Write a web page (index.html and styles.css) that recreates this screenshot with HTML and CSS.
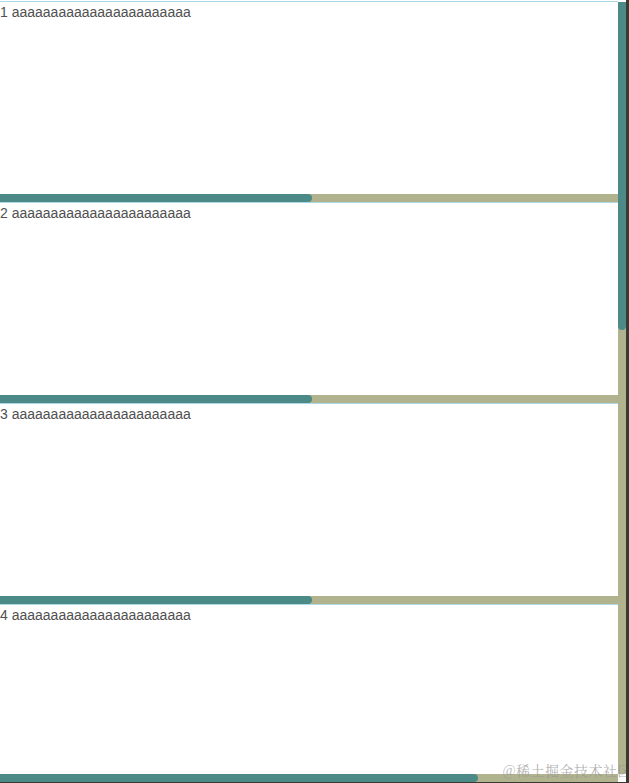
FILE: index.html
```html
<!DOCTYPE html>
<html>
<head>
<meta charset="utf-8">
<link rel="stylesheet" href="styles.css">
</head>
<body>
<div class="frame">
  <div class="main">
    <div class="list">
      <div class="item">
        <div class="content">1 aaaaaaaaaaaaaaaaaaaaaaa</div>
        <div class="hbar"><div class="hthumb"></div></div>
      </div>
      <div class="item">
        <div class="content">2 aaaaaaaaaaaaaaaaaaaaaaa</div>
        <div class="hbar"><div class="hthumb"></div></div>
      </div>
      <div class="item">
        <div class="content">3 aaaaaaaaaaaaaaaaaaaaaaa</div>
        <div class="hbar"><div class="hthumb"></div></div>
      </div>
      <div class="item">
        <div class="content">4 aaaaaaaaaaaaaaaaaaaaaaa</div>
        <div class="hbar"><div class="hthumb"></div></div>
      </div>
    </div>
    <div class="vbar"><div class="vthumb"></div></div>
  </div>
  <div class="bottom">
    <div class="hbar outer"><div class="hthumb wide"></div></div>
    <div class="corner"></div>
  </div>
  <div class="watermark">@稀土掘金技术社区</div>
</div>
</body>
</html>
```
FILE: styles.css
```css
html, body {
  margin: 0;
  padding: 0;
  background: #ffffff;
}
.frame {
  position: relative;
  width: 626px;
  height: 782px;
  border-right: 3px solid #3b3a30;
  border-bottom: 1px solid #3b3a30;
  display: flex;
  flex-direction: column;
  overflow: hidden;
  background: #ffffff;
}
.main {
  display: flex;
  height: 774px;
}
.list {
  width: 618px;
  height: 774px;
  overflow: hidden;
  padding-top: 1px;
  box-sizing: border-box;
  font-family: "Liberation Sans", Arial, sans-serif;
  font-size: 14px;
  color: #505050;
}
.item {
  border-top: 1px solid #add8e6;
  display: flex;
  flex-direction: column;
}
.content {
  height: 192px;
  padding-top: 2px;
  box-sizing: border-box;
  white-space: nowrap;
}
.hbar {
  height: 8px;
  background: #b1b38f;
  display: flex;
  flex-shrink: 0;
}
.hthumb {
  width: 312px;
  height: 8px;
  background: #4c8a87;
  border-radius: 0 4px 4px 0;
}
.hthumb.wide {
  width: 478px;
}
.vbar {
  width: 8px;
  height: 774px;
  padding-top: 2px;
  box-sizing: border-box;
  background: #b1b38f;
  box-shadow: inset 0 2px 0 #ffffff;
}
.vthumb {
  width: 8px;
  height: 328px;
  background: #4c8a87;
  border-radius: 0 0 4px 4px;
}
.bottom {
  display: flex;
  height: 8px;
}
.outer {
  width: 618px;
}
.corner {
  width: 8px;
  height: 8px;
  background: #ffffff;
}
.watermark {
  position: absolute;
  right: -6px;
  bottom: 2px;
  font-family: "Noto Serif CJK SC", "Noto Sans CJK SC", serif;
  font-size: 14px;
  color: rgba(150, 150, 150, 0.75);
  letter-spacing: 0.5px;
  pointer-events: none;
}
```
